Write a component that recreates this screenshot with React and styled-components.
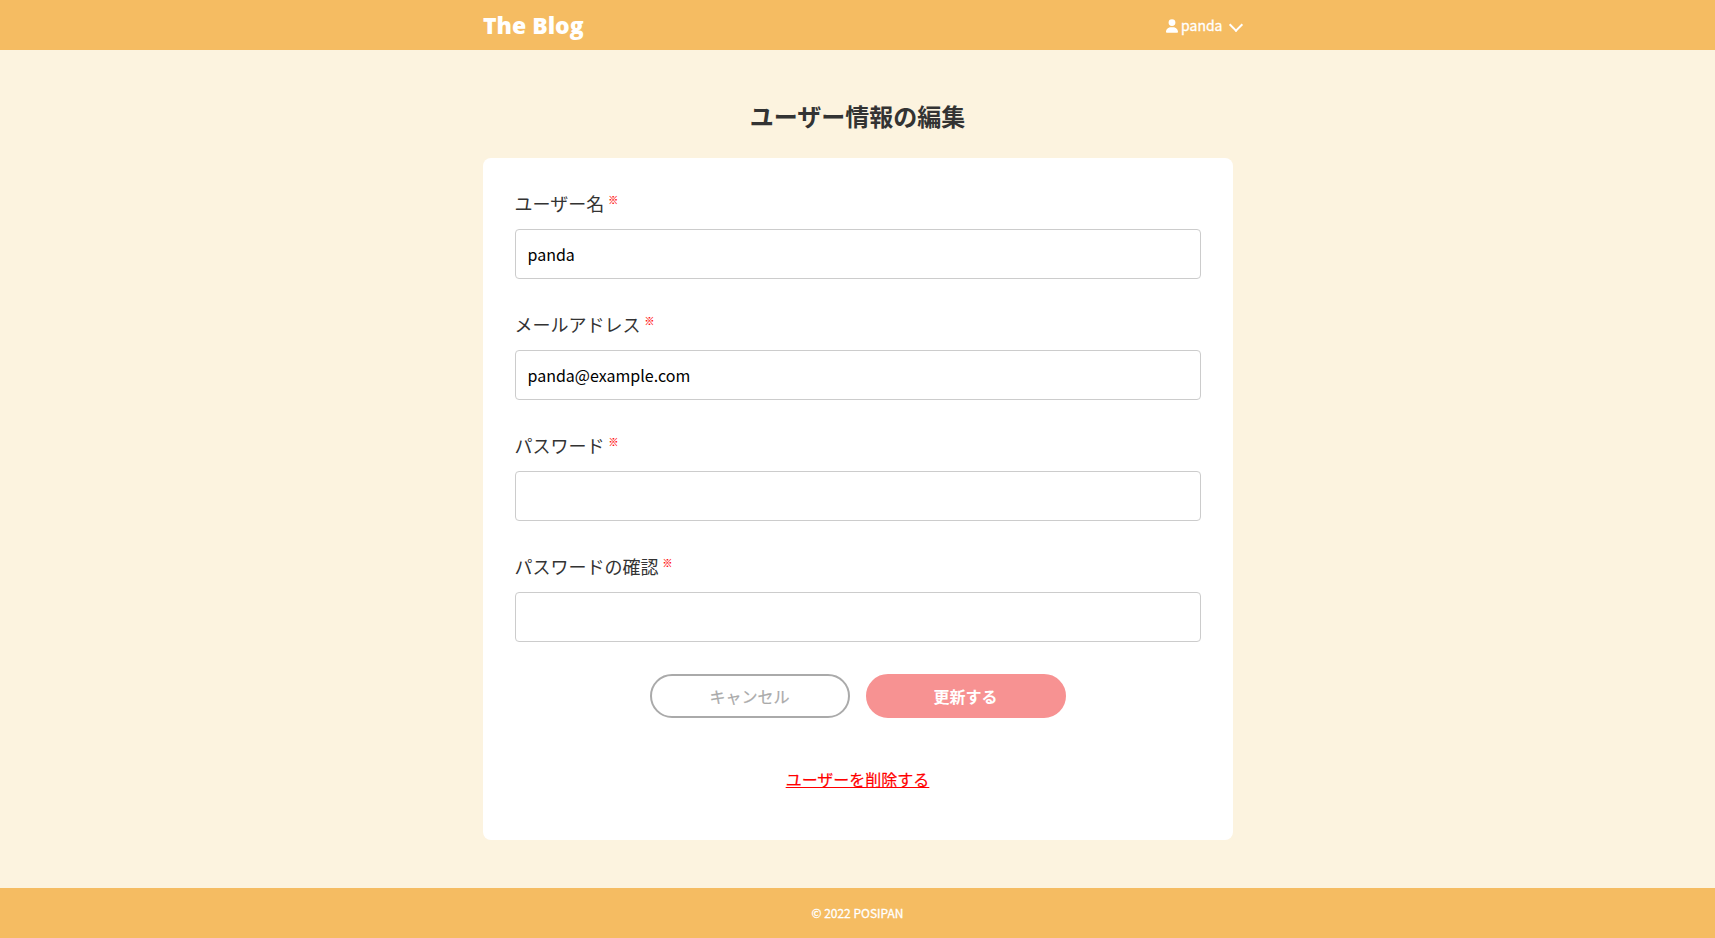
import React from "react";
import styled, { createGlobalStyle } from "styled-components";
import { FaUser } from "react-icons/fa6";

const GlobalStyle = createGlobalStyle`
  *, *::before, *::after { box-sizing: border-box; }
  body {
    margin: 0;
    background: #fdf3df;
    color: #333;
    font-family: "Noto Sans CJK JP", sans-serif;
    font-weight: 400;
    line-height: 1.5;
  }
`;

const Page = styled.div`
  display: flex;
  flex-direction: column;
  min-height: 100vh;
  background: #fcf3df;
`;

const Header = styled.header`
  height: 50px;
  background: #f5bc62;
  color: #fff;
`;

const HeaderInner = styled.div`
  display: flex;
  align-items: center;
  justify-content: space-between;
  width: 750px;
  height: 100%;
  margin: 0 auto;
`;

const Logo = styled.a`
  padding-left: 0.5px;
  color: #fff;
  font-family: "Open Sans", "Noto Sans", sans-serif;
  font-size: 23px;
  font-weight: 800;
  line-height: 1;
  white-space: nowrap;
`;

const UserMenu = styled.div`
  display: flex;
  align-items: center;
  margin-right: -10px;
  padding-top: 2px;
  font-size: 14px;
  font-weight: 400;
  line-height: 20px;

  svg { display: block; width: 12px; margin-right: 3.5px; }
`;

const UserName = styled.span`
  margin-top: -3px;
  -webkit-text-stroke: 0.3px currentColor;
`;

const Chevron = styled.span`
  width: 10px;
  height: 10px;
  margin: -3px 2px 0 8px;
  border: solid #fff;
  border-width: 0 2px 2px 0;
  transform: rotate(45deg);
`;

const Main = styled.main`
  flex: 1;
  width: 750px;
  margin: 0 auto;
  padding: 48px 0;
`;

const Title = styled.h1`
  margin: 0 0 24px;
  font-size: 24px;
  font-weight: 700;
  line-height: 36px;
  text-align: center;
`;

const Card = styled.form`
  height: 682px;
  padding: 32px;
  border-radius: 8px;
  background: #fff;
`;

const Field = styled.div`
  margin-bottom: 32px;
`;

const Label = styled.label`
  display: flex;
  height: 27px;
  margin-bottom: 12px;
  font-size: 18px;
  line-height: 27px;
`;

const Required = styled.span`
  margin-left: 4px;
  color: #f00;
  font-size: 10px;
  line-height: 20px;
  -webkit-text-stroke: 0.2px currentColor;
`;

const Input = styled.input`
  display: block;
  width: 100%;
  height: 50px;
  padding: 0 12px;
  border: 1px solid #ccc;
  border-radius: 4px;
  background: #fff;
  color: #000;
  font: inherit;
  font-size: 16px;
  outline: none;
`;

const Actions = styled.div`
  display: flex;
  justify-content: center;
  gap: 16px;
`;

const Button = styled.button`
  width: 200px;
  height: 44px;
  padding: 0;
  border: 2px solid ${(p) => (p.$primary ? "#f79292" : "#aaa")};
  border-radius: 22px;
  background: ${(p) => (p.$primary ? "#f79292" : "#fff")};
  color: ${(p) => (p.$primary ? "#fff" : "#aaa")};
  font: inherit;
  font-size: 16px;
  font-weight: ${(p) => (p.$primary ? 700 : 400)};
  -webkit-text-stroke: ${(p) => (p.$primary ? "0" : "0.2px")} currentColor;
`;

const DeleteRow = styled.div`
  margin-top: 47px;
  line-height: 28px;
  text-align: center;
`;

const DeleteLink = styled.a`
  color: #f00;
  font-size: 16px;
  text-decoration: underline;
  -webkit-text-stroke: 0.2px currentColor;
`;

const Footer = styled.footer`
  display: flex;
  align-items: center;
  justify-content: center;
  height: 50px;
  background: #f5bc62;
  color: #fff;
  font-size: 12px;
  font-weight: 400;
  -webkit-text-stroke: 0.3px currentColor;
`;

const fields = [
  { id: "name", label: "ユーザー名", type: "text", value: "panda" },
  { id: "email", label: "メールアドレス", type: "email", value: "panda@example.com" },
  { id: "password", label: "パスワード", type: "password", value: "" },
  { id: "confirm", label: "パスワードの確認", type: "password", value: "" },
];

export default function App() {
  return (
    <Page>
      <GlobalStyle />
      <Header>
        <HeaderInner>
          <Logo>The Blog</Logo>
          <UserMenu>
            <FaUser size={14} />
            <UserName>panda</UserName>
            <Chevron />
          </UserMenu>
        </HeaderInner>
      </Header>
      <Main>
        <Title>ユーザー情報の編集</Title>
        <Card>
          {fields.map((f) => (
            <Field key={f.id}>
              <Label htmlFor={f.id}>
                {f.label}
                <Required>※</Required>
              </Label>
              <Input id={f.id} type={f.type} defaultValue={f.value} />
            </Field>
          ))}
          <Actions>
            <Button type="button">キャンセル</Button>
            <Button type="button" $primary>更新する</Button>
          </Actions>
          <DeleteRow>
            <DeleteLink>ユーザーを削除する</DeleteLink>
          </DeleteRow>
        </Card>
      </Main>
      <Footer>© 2022 POSIPAN</Footer>
    </Page>
  );
}
